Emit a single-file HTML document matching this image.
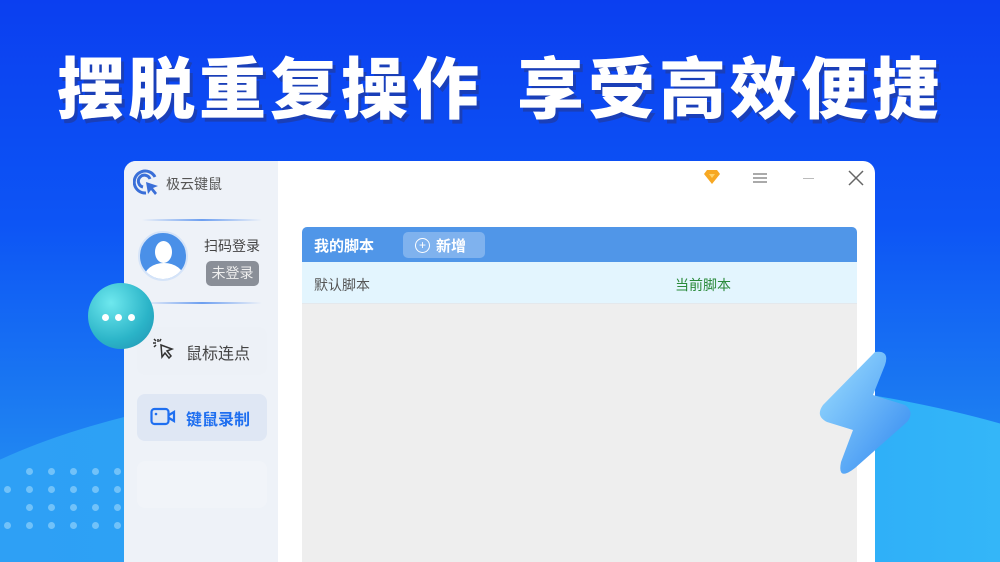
<!DOCTYPE html>
<html><head><meta charset="utf-8"><style>
*{margin:0;padding:0;box-sizing:border-box}
html{width:1000px;height:562px;overflow:hidden}
body{width:1000px;height:562px;overflow:hidden;position:relative;font-family:"Liberation Sans","Noto Sans CJK SC",sans-serif;
background:linear-gradient(180deg,#0b3ff0 0%,#0d55f5 40%,#1a78f2 70%,#2a9cf3 100%);}
.wave{position:absolute;left:-100px;top:370px;width:1300px;height:192px;border-radius:50% 50% 0 0/100% 100% 0 0;background:linear-gradient(90deg,#2f9ff5,#27a6f6 60%,#3cc0fa);}
.title{position:absolute;top:36px;left:0;width:1000px;text-align:center;color:#fff;font-size:67px;font-weight:900;letter-spacing:4px;text-shadow:3px 4px 0 #1a3fb8;font-family:"Noto Sans CJK SC",sans-serif;white-space:nowrap}
.win{position:absolute;left:124px;top:161px;width:751px;height:401px;background:#fff;border-radius:12px 12px 0 0;overflow:hidden}
.side{position:absolute;left:0;top:0;width:154px;height:100%;background:#eef2f8}
.dot{position:absolute;width:7px;height:7px;border-radius:50%;background:#8fd0fb;opacity:.7}
</style></head><body>
<div class="wave"></div>
<div id="dots"></div>
<div class="title">摆脱重复操作<span style="display:inline-block;width:34px"></span>享受高效便捷</div>
<div class="win">
 <div class="side">
  <svg style="position:absolute;left:9px;top:8px" width="28" height="28" viewBox="0 0 28 28"><path d="M22 8A11 11 0 1 0 13 24" stroke="#3a6fd8" stroke-width="3" fill="none"/><path d="M17 10A6 6 0 1 0 10 18" stroke="#3a6fd8" stroke-width="3" fill="none"/><path d="M13 13L25 17L20 19L24 24L22 26L18 21L15 25Z" fill="#3a6fd8"/></svg>
  <div style="position:absolute;left:42px;top:13px;font-size:14px;color:#555">极云键鼠</div>
  <div style="position:absolute;left:18px;top:58px;width:120px;height:2px;background:linear-gradient(90deg,transparent,#6d9ff0,transparent)"></div>
  <div style="position:absolute;left:14px;top:70px;width:50px;height:50px;border-radius:50%;background:#4a90e8;overflow:hidden;border:2px solid #d6e4f8">
   <div style="position:absolute;left:15px;top:8px;width:17px;height:22px;border-radius:50%;background:#fff"></div>
   <div style="position:absolute;left:4px;top:30px;width:40px;height:30px;border-radius:50% 50% 0 0;background:#fff"></div>
  </div>
  <div style="position:absolute;left:80px;top:75px;font-size:14px;color:#444">扫码登录</div>
  <div style="position:absolute;left:82px;top:100px;width:53px;height:25px;border-radius:5px;background:#8a8f98;color:#eee;font-size:14px;text-align:center;line-height:25px">未登录</div>
  <div style="position:absolute;left:18px;top:141px;width:120px;height:2px;background:linear-gradient(90deg,transparent,#6d9ff0,transparent)"></div>
  <div style="position:absolute;left:13px;top:166px;width:130px;height:48px;border-radius:8px;background:#edf1f7"></div>
  <svg style="position:absolute;left:28px;top:176px" width="24" height="24" viewBox="0 0 24 24"><path d="M9 8L20 12L15 14L19 19L17 21L13 16L10 20Z" fill="none" stroke="#333" stroke-width="1.5"/><path d="M6 2V5M1 6H4M2 2L4 4M9 2L7.5 4.5M2 10L4 8" stroke="#333" stroke-width="1.5"/></svg>
  <div style="position:absolute;left:62px;top:179px;font-size:16px;color:#444">鼠标连点</div>
  <div style="position:absolute;left:13px;top:233px;width:130px;height:47px;border-radius:8px;background:#dfe7f4"></div>
  <svg style="position:absolute;left:26px;top:246px" width="26" height="20" viewBox="0 0 26 20"><rect x="1.5" y="2" width="17" height="15" rx="3" fill="none" stroke="#1f6ff0" stroke-width="2.2"/><path d="M19 8L24 5V14L19 11" fill="none" stroke="#1f6ff0" stroke-width="2.2"/><circle cx="6" cy="7" r="1.3" fill="#1f6ff0"/></svg>
  <div style="position:absolute;left:62px;top:245px;font-size:16px;color:#1f6ff0;font-weight:bold">键鼠录制</div>
  <div style="position:absolute;left:13px;top:300px;width:130px;height:47px;border-radius:8px;background:#f1f4f9"></div>
 </div>
 <svg style="position:absolute;left:579px;top:8px" width="18" height="16" viewBox="0 0 18 16"><path d="M4 1H14L17 5L9 15L1 5Z" fill="#f7a823"/><path d="M6 5H12L9 9Z" fill="#ffd36a"/></svg>
 <div style="position:absolute;left:629px;top:12px;width:14px;height:2px;background:#aaa;box-shadow:0 4px 0 #aaa,0 8px 0 #aaa"></div>
 <div style="position:absolute;left:679px;top:17px;width:11px;height:1px;background:#bbb"></div>
 <svg style="position:absolute;left:724px;top:9px" width="16" height="16"><path d="M1 1L15 15M15 1L1 15" stroke="#666" stroke-width="1.5"/></svg>
 <div style="position:absolute;left:178px;top:66px;width:555px;height:340px;background:#eeeeee;border-radius:5px 5px 0 0;overflow:hidden">
  <div style="height:35px;background:#5096e8;position:relative">
   <div style="position:absolute;left:12px;top:8px;color:#fff;font-size:15px;font-weight:bold">我的脚本</div>
   <div style="position:absolute;left:101px;top:5px;width:82px;height:26px;border-radius:5px;background:#7fb2ee"></div>
   <div style="position:absolute;left:113px;top:11px;width:15px;height:15px;border-radius:50%;border:1.3px solid #fff;color:#fff;font-size:12px;line-height:12px;text-align:center">+</div>
   <div style="position:absolute;left:134px;top:8px;color:#fff;font-size:15px;font-weight:bold">新增</div>
  </div>
  <div style="height:42px;background:#e3f5fe;position:relative;border-bottom:1px solid #e4e8ec">
   <div style="position:absolute;left:12px;top:13px;font-size:14px;color:#555">默认脚本</div>
   <div style="position:absolute;left:373px;top:13px;font-size:14px;color:#2a8a3a">当前脚本</div>
  </div>
 </div>
</div>
<div style="position:absolute;left:88px;top:283px;width:66px;height:66px;border-radius:50%;background:radial-gradient(circle at 35% 30%,#6ee8ee,#2bb4c8 60%,#1f8fb0)"></div>
<div style="position:absolute;left:102px;top:314px;width:7px;height:7px;border-radius:50%;background:#fff;box-shadow:13px 0 0 #fff,26px 0 0 #fff"></div>
<svg style="position:absolute;left:815px;top:350px" width="100" height="125" viewBox="0 0 100 125"><defs><linearGradient id="g" x1="0" y1="0" x2="1" y2="1"><stop offset="0" stop-color="#9fe0ff"/><stop offset="1" stop-color="#2f86f0"/></linearGradient></defs><path d="M60 2Q75 0 70 15L58 45L90 55Q100 62 92 72L40 118Q22 132 26 112L38 80L12 72Q0 66 8 55Z" fill="url(#g)"/></svg>
<script>
var h='';for(var r=0;r<4;r++)for(var c=0;c<6;c++){h+='<div class="dot" style="left:'+(4+c*22+(r%2?0:22))+'px;top:'+(468+r*18)+'px"></div>'}
document.getElementById('dots').innerHTML=h;
</script>
</body></html>
